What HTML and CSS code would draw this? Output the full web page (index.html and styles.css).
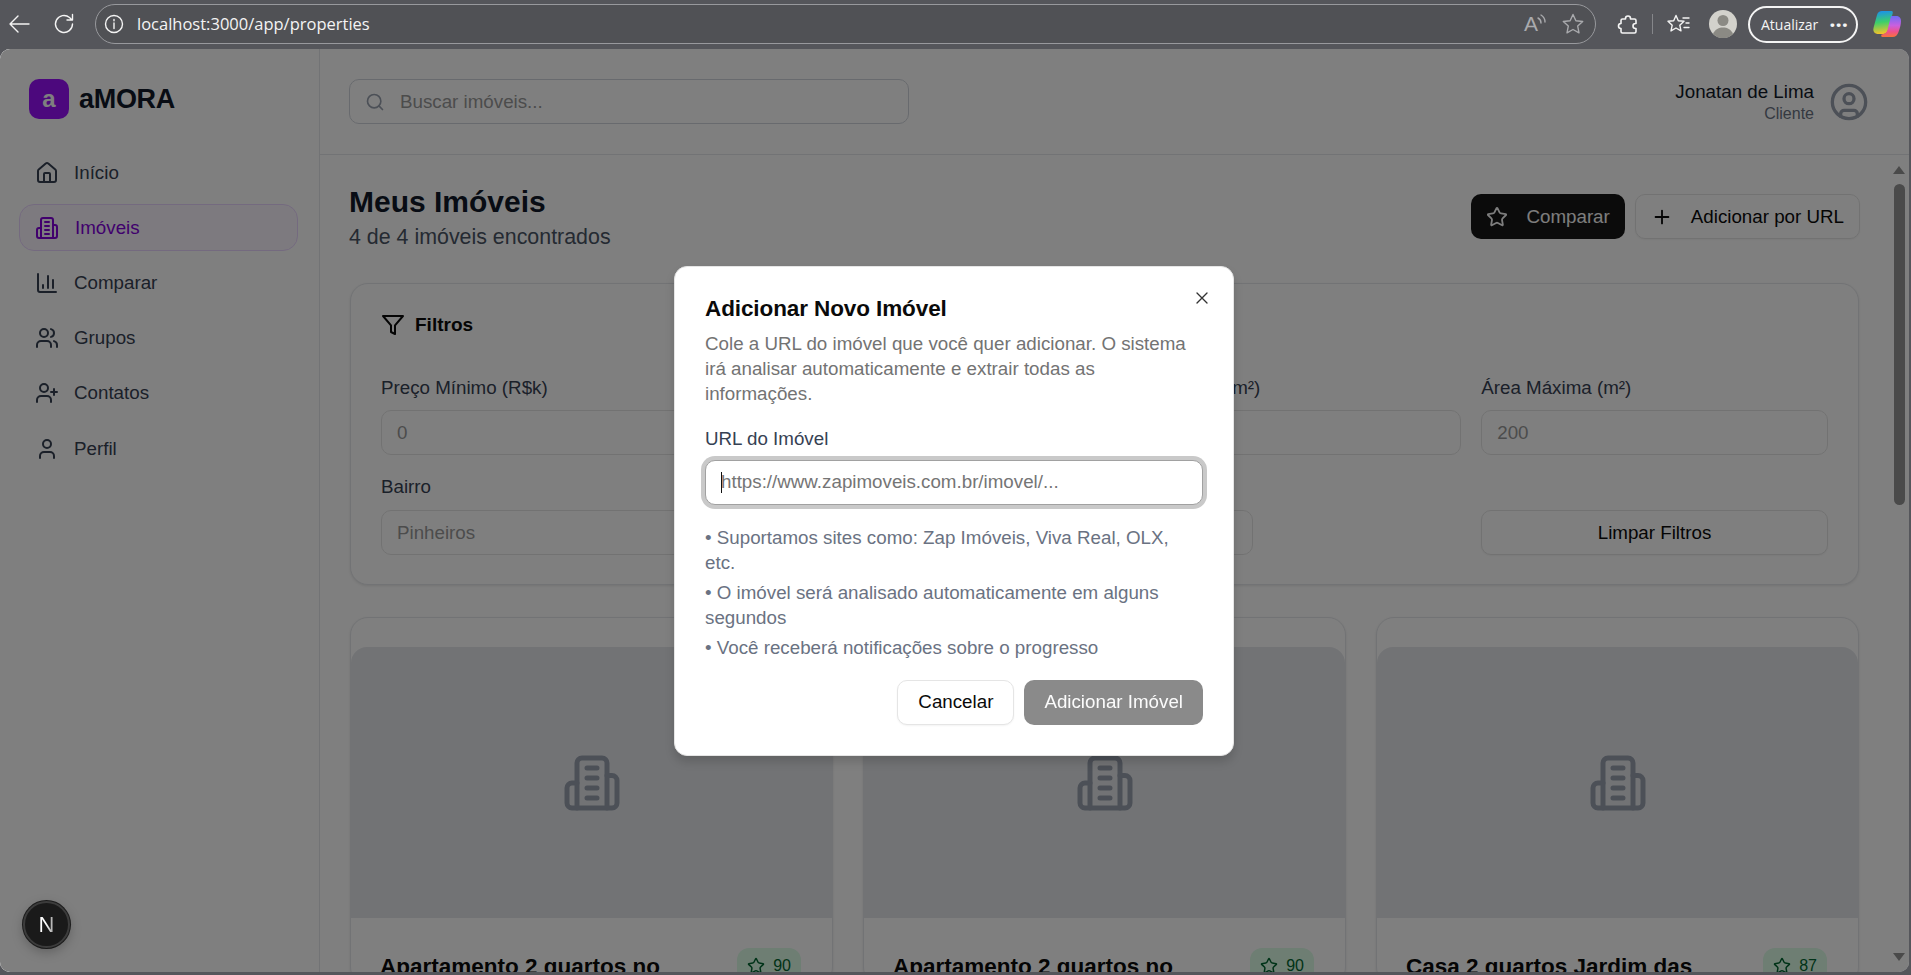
FILE: index.html
```html
<!DOCTYPE html>
<html lang="pt-BR">

<head>
    <meta charset="UTF-8">
    <meta name="viewport" content="width=device-width, initial-scale=1.0">
    <title>aMORA - Meus Imóveis</title>
    <link rel="stylesheet" href="styles.css">
</head>

<body>
    <!-- browser toolbar -->
    <div class="toolbar">
        <svg class="tb-icon" viewBox="0 0 24 24"><path d="M22 12H3M11 4l-8 8 8 8" /></svg>
        <svg class="tb-icon tb-reload" viewBox="0 0 24 24"><path d="M20.5 12a8.5 8.5 0 1 1-3-6.5L20 8M20.5 2.5V8H15" /></svg>
        <div class="addressbar">
            <svg class="tb-icon" viewBox="0 0 24 24"><circle cx="12" cy="12" r="8.5" /><path d="M12 11v5.5M12 7.5v1.2" /></svg>
            <span class="url">localhost:3000/app/properties</span>
            <span class="read-a">A</span>
            <svg class="tb-icon tb-dim tb-waves" viewBox="0 0 24 24"><path d="M4 6c2 1 3 2.500 3 5M7 3c2.500 1.500 4 4 4 7" /></svg>
            <svg class="tb-icon tb-dim tb-star" viewBox="0 0 24 24"><path d="M12 2.500l2.900 6.200 6.800.8-5 4.600 1.300 6.700-6-3.300-6 3.300 1.300-6.700-5-4.600 6.800-.8z" /></svg>
        </div>
        <svg class="tb-icon tb-puzzle" viewBox="0 0 24 24"><path d="M9.500 6.500a2.500 2.500 0 1 1 5 0V7h4a1.500 1.500 0 0 1 1.500 1.500v3h-.5a2.500 2.500 0 1 0 0 5h.5v3a1.500 1.500 0 0 1-1.500 1.500h-12A1.500 1.500 0 0 1 5 19.500v-3a2.500 2.500 0 1 1 0-5v-3A1.500 1.500 0 0 1 6.500 7h3z" /></svg>
        <span class="tb-sep"></span>
        <svg class="tb-icon tb-favs" viewBox="0 0 24 24"><path d="M10 3.500l2.300 5.200 5.700.6-4.200 3.900 1.200 5.700-5-2.900-5 2.900 1.200-5.700L2 9.300l5.700-.6zM17 6h6M20 11h3M18 15.500h5" /></svg>
        <svg class="tb-avatar" viewBox="0 0 28 28"><circle cx="14" cy="14" r="14" fill="#d3d2cc" /><circle cx="14" cy="10.500" r="5.500" fill="#8b8a84" /><path d="M4 24c2-5 6-6.500 10-6.500s8 1.500 10 6.500a14 14 0 0 1-20 0z" fill="#8b8a84" /></svg>
        <div class="update-pill"><span>Atualizar</span><span class="dots">···</span></div>
        <svg class="tb-copilot" viewBox="0 0 28 28">
            <defs>
                <linearGradient id="copA" x1="0.2" y1="0" x2="0.3" y2="1"><stop offset="0" stop-color="#1a8ef0" /><stop offset="0.5" stop-color="#3ccf6a" /><stop offset="1" stop-color="#f5c22a" /></linearGradient>
                <linearGradient id="copB" x1="0.5" y1="0" x2="0.5" y2="1"><stop offset="0" stop-color="#6e6cf5" /><stop offset="0.45" stop-color="#c860e0" /><stop offset="0.75" stop-color="#f0508a" /><stop offset="1" stop-color="#f8733a" /></linearGradient>
            </defs>
            <path d="M9 1h9.500c1.500 0 1.500 1.500 1 3L15 20c-.8 2.500-2.500 4-5 4H6c-2.500 0-4-.5-5-2-1-1.500-.8-3 0-6l3-11C5 2 6.500 1 9 1z" fill="url(#copA)" />
            <path d="M18 6h5c3 0 5 1.500 5 5 0 3-1 7-2.500 11-1 3-3 5-6 5H9.500c-1.500 0-1.500-1-1-2.500 3-.5 5-1.500 6-4.500z" fill="url(#copB)" />
        </svg>
    </div>

    <div class="viewport">
        <aside class="sidebar">
            <div class="brand">
                <span class="brand-mark">a</span>
                <span class="brand-name">aMORA</span>
            </div>
            <nav class="nav">
                <a class="nav-item"><svg class="icon" viewBox="0 0 24 24"><path d="M15 21v-8a1 1 0 0 0-1-1h-4a1 1 0 0 0-1 1v8" /><path d="M3 10a2 2 0 0 1 .709-1.528l7-5.999a2 2 0 0 1 2.582 0l7 5.999A2 2 0 0 1 21 10v9a2 2 0 0 1-2 2H5a2 2 0 0 1-2-2z" /></svg>Início</a>
                <a class="nav-item active"><svg class="icon" viewBox="0 0 24 24"><path d="M6 22V4a2 2 0 0 1 2-2h8a2 2 0 0 1 2 2v18Z" /><path d="M6 12H4a2 2 0 0 0-2 2v6a2 2 0 0 0 2 2h2" /><path d="M18 9h2a2 2 0 0 1 2 2v9a2 2 0 0 1-2 2h-2" /><path d="M10 6h4M10 10h4M10 14h4M10 18h4" /></svg>Imóveis</a>
                <a class="nav-item"><svg class="icon" viewBox="0 0 24 24"><path d="M3 3v16a2 2 0 0 0 2 2h16" /><path d="M18 17V9M13 17V5M8 17v-3" /></svg>Comparar</a>
                <a class="nav-item"><svg class="icon" viewBox="0 0 24 24"><path d="M16 21v-2a4 4 0 0 0-4-4H6a4 4 0 0 0-4 4v2" /><circle cx="9" cy="7" r="4" /><path d="M22 21v-2a4 4 0 0 0-3-3.870" /><path d="M16 3.130a4 4 0 0 1 0 7.750" /></svg>Grupos</a>
                <a class="nav-item"><svg class="icon" viewBox="0 0 24 24"><path d="M16 21v-2a4 4 0 0 0-4-4H6a4 4 0 0 0-4 4v2" /><circle cx="9" cy="7" r="4" /><path d="M19 8v6M22 11h-6" /></svg>Contatos</a>
                <a class="nav-item"><svg class="icon" viewBox="0 0 24 24"><path d="M19 21v-2a4 4 0 0 0-4-4H9a4 4 0 0 0-4 4v2" /><circle cx="12" cy="7" r="4" /></svg>Perfil</a>
            </nav>
        </aside>

        <div class="main">
            <header class="topbar">
                <div class="search">
                    <svg class="icon search-icon" viewBox="0 0 24 24"><circle cx="11" cy="11" r="8" /><path d="m21 21-4.300-4.300" /></svg>
                    <input type="text" placeholder="Buscar imóveis...">
                </div>
                <div class="user">
                    <div class="user-info">
                        <div class="user-name">Jonatan de Lima</div>
                        <div class="user-role">Cliente</div>
                    </div>
                    <svg class="icon user-icon" viewBox="0 0 24 24"><circle cx="12" cy="12" r="10" /><circle cx="12" cy="10" r="3" /><path d="M7 20.662V19a2 2 0 0 1 2-2h6a2 2 0 0 1 2 2v1.662" /></svg>
                </div>
            </header>

            <div class="scroll-area">
                <div class="content">
                    <div class="page-head">
                        <div>
                            <h1>Meus Imóveis</h1>
                            <p class="subtitle">4 de 4 imóveis encontrados</p>
                        </div>
                        <div class="page-actions">
                            <button class="btn btn-dark"><svg class="icon" viewBox="0 0 24 24"><path d="M11.525 2.295a.530.530 0 0 1 .950 0l2.310 4.679a2.123 2.123 0 0 0 1.595 1.160l5.166.756a.530.530 0 0 1 .294.904l-3.736 3.638a2.123 2.123 0 0 0-.611 1.878l.882 5.140a.530.530 0 0 1-.771.560l-4.618-2.428a2.122 2.122 0 0 0-1.973 0L6.396 21.010a.530.530 0 0 1-.770-.560l.881-5.139a2.122 2.122 0 0 0-.611-1.879L2.160 9.795a.530.530 0 0 1 .294-.906l5.165-.755a2.122 2.122 0 0 0 1.597-1.160z" /></svg>Comparar</button>
                            <button class="btn btn-outline"><svg class="icon" viewBox="0 0 24 24"><path d="M5 12h14M12 5v14" /></svg>Adicionar por URL</button>
                        </div>
                    </div>

                    <section class="filters">
                        <h2><svg class="icon" viewBox="0 0 24 24"><polygon points="22 3 2 3 10 12.460 10 19 14 21 14 12.460 22 3" /></svg>Filtros</h2>
                        <div class="filter-row">
                            <div class="field"><label>Preço Mínimo (R$k)</label><input type="text" placeholder="0"></div>
                            <div class="field"><label></label><input type="text"></div>
                            <div class="field"><label>Área Mínima (m²)</label><input type="text"></div>
                            <div class="field"><label>Área Máxima (m²)</label><input type="text" placeholder="200"></div>
                        </div>
                        <div class="filter-row filter-row-2">
                            <div class="field"><label>Bairro</label><input type="text" placeholder="Pinheiros"></div>
                            <div class="field"><label></label><input type="text"></div>
                            <div class="field field-end"><button class="btn btn-outline btn-wide">Limpar Filtros</button></div>
                        </div>
                    </section>

                    <div class="property-grid">
                        <article class="property">
                            <div class="property-img"><svg class="icon" viewBox="0 0 24 24"><path d="M6 22V4a2 2 0 0 1 2-2h8a2 2 0 0 1 2 2v18Z" /><path d="M6 12H4a2 2 0 0 0-2 2v6a2 2 0 0 0 2 2h2" /><path d="M18 9h2a2 2 0 0 1 2 2v9a2 2 0 0 1-2 2h-2" /><path d="M10 6h4M10 10h4M10 14h4M10 18h4" /></svg></div>
                            <div class="property-body">
                                <h3>Apartamento 2 quartos no</h3>
                                <span class="score"><svg class="icon" viewBox="0 0 24 24"><path d="M11.525 2.295a.530.530 0 0 1 .950 0l2.310 4.679a2.123 2.123 0 0 0 1.595 1.160l5.166.756a.530.530 0 0 1 .294.904l-3.736 3.638a2.123 2.123 0 0 0-.611 1.878l.882 5.140a.530.530 0 0 1-.771.560l-4.618-2.428a2.122 2.122 0 0 0-1.973 0L6.396 21.010a.530.530 0 0 1-.770-.560l.881-5.139a2.122 2.122 0 0 0-.611-1.879L2.160 9.795a.530.530 0 0 1 .294-.906l5.165-.755a2.122 2.122 0 0 0 1.597-1.160z" /></svg>90</span>
                            </div>
                        </article>
                        <article class="property">
                            <div class="property-img"><svg class="icon" viewBox="0 0 24 24"><path d="M6 22V4a2 2 0 0 1 2-2h8a2 2 0 0 1 2 2v18Z" /><path d="M6 12H4a2 2 0 0 0-2 2v6a2 2 0 0 0 2 2h2" /><path d="M18 9h2a2 2 0 0 1 2 2v9a2 2 0 0 1-2 2h-2" /><path d="M10 6h4M10 10h4M10 14h4M10 18h4" /></svg></div>
                            <div class="property-body">
                                <h3>Apartamento 2 quartos no</h3>
                                <span class="score"><svg class="icon" viewBox="0 0 24 24"><path d="M11.525 2.295a.530.530 0 0 1 .950 0l2.310 4.679a2.123 2.123 0 0 0 1.595 1.160l5.166.756a.530.530 0 0 1 .294.904l-3.736 3.638a2.123 2.123 0 0 0-.611 1.878l.882 5.140a.530.530 0 0 1-.771.560l-4.618-2.428a2.122 2.122 0 0 0-1.973 0L6.396 21.010a.530.530 0 0 1-.770-.560l.881-5.139a2.122 2.122 0 0 0-.611-1.879L2.160 9.795a.530.530 0 0 1 .294-.906l5.165-.755a2.122 2.122 0 0 0 1.597-1.160z" /></svg>90</span>
                            </div>
                        </article>
                        <article class="property">
                            <div class="property-img"><svg class="icon" viewBox="0 0 24 24"><path d="M6 22V4a2 2 0 0 1 2-2h8a2 2 0 0 1 2 2v18Z" /><path d="M6 12H4a2 2 0 0 0-2 2v6a2 2 0 0 0 2 2h2" /><path d="M18 9h2a2 2 0 0 1 2 2v9a2 2 0 0 1-2 2h-2" /><path d="M10 6h4M10 10h4M10 14h4M10 18h4" /></svg></div>
                            <div class="property-body">
                                <h3>Casa 2 quartos Jardim das</h3>
                                <span class="score"><svg class="icon" viewBox="0 0 24 24"><path d="M11.525 2.295a.530.530 0 0 1 .950 0l2.310 4.679a2.123 2.123 0 0 0 1.595 1.160l5.166.756a.530.530 0 0 1 .294.904l-3.736 3.638a2.123 2.123 0 0 0-.611 1.878l.882 5.140a.530.530 0 0 1-.771.560l-4.618-2.428a2.122 2.122 0 0 0-1.973 0L6.396 21.010a.530.530 0 0 1-.770-.560l.881-5.139a2.122 2.122 0 0 0-.611-1.879L2.160 9.795a.530.530 0 0 1 .294-.906l5.165-.755a2.122 2.122 0 0 0 1.597-1.160z" /></svg>87</span>
                            </div>
                        </article>
                    </div>
                </div>

                <div class="scrollbar">
                    <span class="arrow-up"></span>
                    <span class="thumb"></span>
                    <span class="arrow-down"></span>
                </div>
            </div>
        </div>

        <div class="overlay">
            <div class="modal">
                <svg class="icon modal-close" viewBox="0 0 24 24"><path d="M18 6 6 18M6 6l12 12" /></svg>
                <h2 class="modal-title">Adicionar Novo Imóvel</h2>
                <p class="modal-desc">Cole a URL do imóvel que você quer adicionar. O sistema irá analisar automaticamente e extrair todas as informações.</p>
                <label class="modal-label">URL do Imóvel</label>
                <div class="modal-input">
                    <input type="text" placeholder="https://www.zapimoveis.com.br/imovel/...">
                    <span class="caret"></span>
                </div>
                <ul class="modal-notes">
                    <li>• Suportamos sites como: Zap Imóveis, Viva Real, OLX, etc.</li>
                    <li>• O imóvel será analisado automaticamente em alguns segundos</li>
                    <li>• Você receberá notificações sobre o progresso</li>
                </ul>
                <div class="modal-actions">
                    <button class="btn btn-outline">Cancelar</button>
                    <button class="btn btn-disabled">Adicionar Imóvel</button>
                </div>
            </div>
        </div>

        <!-- dev tools badge sits above the dialog backdrop -->
        <div class="next-badge"><span class="next-n">N</span></div>
    </div>
</body>

</html>
```

FILE: styles.css
```css
* {
    box-sizing: border-box;
}

html,
body {
    height: 100%;
    margin: 0;
}

body {
    display: flex;
    flex-direction: column;
    overflow: hidden;
    background-color: #55565b;
    font-family: "Liberation Sans", Arial, Helvetica, sans-serif;
    font-size: 18.75px;
    color: #0a0a0a;
}

h1,
h2,
h3,
p,
ul {
    margin: 0;
    padding: 0;
}

button,
input {
    font: inherit;
}

.icon {
    display: block;
    flex: none;
    width: 24px;
    height: 24px;
    fill: none;
    stroke: currentColor;
    stroke-width: 2;
    stroke-linecap: round;
    stroke-linejoin: round;
}

/* browser toolbar */
.toolbar {
    display: flex;
    align-items: center;
    flex: none;
    height: 49px;
    padding: 0 10px 1px 7px;
    color: #f4f4f4;
}

.tb-icon {
    flex: none;
    width: 24px;
    height: 24px;
    fill: none;
    stroke: currentColor;
    stroke-width: 1.4;
    stroke-linecap: round;
    stroke-linejoin: round;
}

.tb-reload {
    margin-left: 21px;
}

.addressbar {
    display: flex;
    align-items: center;
    flex: 1;
    height: 40px;
    margin-left: 19px;
    padding: 0 10px 0 6px;
    background-color: #505155;
    border: 1px solid #98999d;
    border-radius: 20px;
}

.url {
    flex: 1;
    margin: -2px 0 0 11px;
    font-family: "Open Sans", sans-serif;
    font-size: 16.5px;
}

.tb-dim {
    color: #a9aaad;
}

.read-a {
    font-size: 21px;
    color: #a9aaad;
}

.tb-waves {
    margin-left: -4px;
}

.tb-star {
    margin-left: 3px;
}

.tb-puzzle {
    margin-left: 20px;
    stroke-width: 1.6;
}

.tb-sep {
    width: 1px;
    height: 20px;
    margin: 0 13px 0 12px;
    background-color: #85868a;
}

.tb-avatar {
    flex: none;
    width: 28px;
    height: 28px;
    margin-left: 19px;
}

.update-pill {
    display: flex;
    align-items: center;
    justify-content: space-between;
    width: 110px;
    height: 37px;
    margin-left: 11px;
    padding: 0 8px 0 11px;
    border: 2px solid #f4f4f4;
    border-radius: 19px;
    font-family: "Open Sans", sans-serif;
    font-size: 14px;
}

.dots {
    font-size: 22px;
    font-weight: 700;
    line-height: 20px;
}

.tb-copilot {
    flex: none;
    width: 28px;
    height: 28px;
    margin-left: 15px;
}

/* app window */
.viewport {
    position: relative;
    display: flex;
    flex: 1;
    min-height: 0;
    margin: 0 2px 3px 0;
    background-color: #fff;
    border-radius: 10px;
    overflow: hidden;
}

.sidebar {
    flex: none;
    width: 320px;
    padding: 30px 21px 0 19px;
    background-color: #fff;
    border-right: 1px solid #e5e7eb;
}

.brand {
    display: flex;
    align-items: center;
    gap: 10px;
    padding-left: 10px;
}

.brand-mark {
    display: flex;
    align-items: center;
    justify-content: center;
    width: 40px;
    height: 40px;
    background-color: #9810fa;
    border-radius: 10px;
    color: #fff;
    font-size: 24px;
    font-weight: 700;
}

.brand-name {
    font-size: 27px;
    font-weight: 700;
    color: #101828;
    letter-spacing: -0.3px;
}

.nav {
    display: flex;
    flex-direction: column;
    gap: 8px;
    margin-top: 30px;
}

.nav-item {
    display: flex;
    align-items: center;
    gap: 15px;
    height: 47.2px;
    padding: 0 15px;
    border: 1px solid transparent;
    border-radius: 15px;
    color: #364153;
}

.nav-item.active {
    gap: 16px;
    background-color: #faf5ff;
    border-color: #e9d4ff;
    color: #8200db;
}

.main {
    display: flex;
    flex-direction: column;
    flex: 1;
    min-width: 0;
}

.topbar {
    display: flex;
    align-items: center;
    justify-content: space-between;
    flex: none;
    height: 106px;
    padding: 0 40px 0 29px;
    border-bottom: 1px solid #e5e7eb;
}

.search {
    display: flex;
    align-items: center;
    gap: 15px;
    width: 560px;
    height: 45px;
    padding: 0 15px;
    border: 1px solid #d1d5dc;
    border-radius: 10px;
}

.search-icon {
    width: 20px;
    height: 20px;
    color: #99a1af;
}

.search input {
    flex: 1;
    border: none;
    outline: none;
    background: none;
    padding: 0;
}

input::placeholder {
    color: #999;
}

.user {
    display: flex;
    align-items: center;
    gap: 15px;
}

.user-info {
    text-align: right;
}

.user-name {
    line-height: 25px;
    color: #101828;
}

.user-role {
    font-size: 16px;
    line-height: 20px;
    color: #6a7282;
}

.user-icon {
    width: 40px;
    height: 40px;
    color: #99a1af;
}

.scroll-area {
    display: flex;
    flex: 1;
    min-height: 0;
}

.content {
    flex: 1;
    min-width: 0;
    padding: 29px 30px 0 30px;
}

.page-head {
    display: flex;
    align-items: center;
    justify-content: space-between;
    margin: 0 -1px;
}

h1 {
    font-size: 30px;
    line-height: 36px;
    font-weight: 700;
    color: #101828;
}

.subtitle {
    margin-top: 3px;
    font-size: 21.4px;
    line-height: 28px;
    color: #4a5565;
}

.page-actions {
    display: flex;
    gap: 10px;
    margin-top: -2px;
}

.btn {
    display: inline-flex;
    align-items: center;
    justify-content: center;
    height: 45px;
    padding: 0 15px;
    border: 1px solid transparent;
    border-radius: 10px;
    white-space: nowrap;
}

.btn .icon {
    width: 22px;
    height: 22px;
    margin-right: 18px;
}

.btn-dark {
    padding: 0 14px;
    background-color: #171717;
    color: #fafafa;
}

.btn-outline {
    background-color: #fff;
    border-color: #e5e5e5;
    color: #0a0a0a;
    box-shadow: 0 1px 2px rgba(0, 0, 0, 0.05);
}

.btn-disabled {
    background-color: #171717;
    color: #fafafa;
    opacity: 0.5;
    padding: 0 19px;
}

.filters {
    margin-top: 32px;
    padding: 30px 30px 29px;
    background-color: #fff;
    border: 1px solid #e5e7eb;
    border-radius: 18px;
    box-shadow: 0 1px 3px rgba(0, 0, 0, 0.1);
}

.filters h2 {
    display: flex;
    align-items: center;
    gap: 10px;
    height: 22px;
    font-size: 19px;
    font-weight: 700;
}

.filter-row {
    display: grid;
    grid-template-columns: repeat(4, 1fr);
    gap: 20px;
    margin-top: 39px;
}

.filter-row-2 {
    grid-template-columns: 347px 505px 1fr 347px;
    margin-top: 19px;
}

.field {
    display: flex;
    flex-direction: column;
    gap: 10px;
}

.filter-row-2 .field {
    gap: 11px;
}

.field-end {
    grid-column: 4;
    justify-content: flex-end;
}

.field label {
    min-height: 25px;
    line-height: 25px;
    color: #364153;
}

.field input {
    height: 45px;
    padding: 0 15px;
    background: #fff;
    border: 1px solid #e5e5e5;
    border-radius: 10px;
    outline: none;
}

.btn-wide {
    width: 100%;
}

.property-grid {
    display: grid;
    grid-template-columns: repeat(3, 1fr);
    gap: 30px;
    margin-top: 32px;
}

.property {
    padding-top: 29px;
    background-color: #fff;
    border: 1px solid #e5e7eb;
    border-radius: 18px;
    box-shadow: 0 1px 3px rgba(0, 0, 0, 0.1);
}

.property-img {
    display: flex;
    align-items: center;
    justify-content: center;
    height: 271px;
    background-color: #e5e7eb;
    border-radius: 16px 16px 0 0;
    color: #99a1af;
}

.property-img .icon {
    width: 60px;
    height: 60px;
}

.property-body {
    display: flex;
    align-items: flex-start;
    justify-content: space-between;
    padding: 30px 31px 0 29px;
}

.property-body h3 {
    font-size: 22.5px;
    line-height: 30px;
    font-weight: 700;
    margin-top: 4px;
}

.score {
    display: flex;
    align-items: center;
    gap: 8px;
    height: 36px;
    padding: 0 10px;
    background-color: #dcfce7;
    border-radius: 12px;
    font-size: 16px;
    color: #016630;
}

.score .icon {
    width: 18px;
    height: 18px;
}

/* fake scrollbar, the page behind the dialog does not scroll */
.scrollbar {
    display: flex;
    flex-direction: column;
    align-items: center;
    flex: none;
    width: 20px;
    padding-top: 11px;
}

.arrow-up,
.arrow-down {
    width: 0;
    height: 0;
    border-left: 6px solid transparent;
    border-right: 6px solid transparent;
}

.arrow-up {
    border-bottom: 8px solid #959595;
}

.arrow-down {
    margin-top: 448px;
    border-top: 8px solid #959595;
}

.thumb {
    width: 11px;
    height: 321px;
    margin-top: 10px;
    background-color: #959595;
    border-radius: 6px;
}

.next-badge {
    position: absolute;
    left: 23px;
    bottom: 24px;
    display: flex;
    align-items: center;
    justify-content: center;
    width: 47px;
    height: 47px;
    background-color: #1a1a1a;
    border: 2px solid #3c3c3c;
    border-radius: 50%;
    box-shadow: 0 0 0 1px #1a1a1a, 0 4px 12px rgba(0, 0, 0, 0.25);
}

.next-n {
    font-size: 22px;
    line-height: 22px;
    background: linear-gradient(90deg, #fff 45%, #999 100%);
    -webkit-background-clip: text;
    background-clip: text;
    color: transparent;
}

/* dialog */
.overlay {
    position: absolute;
    inset: 0;
    display: flex;
    align-items: center;
    justify-content: center;
    padding-right: 1px;
    background-color: rgba(0, 0, 0, 0.5);
}

.modal {
    position: relative;
    width: 560px;
    padding: 30px;
    background-color: #fff;
    border: 1px solid #e5e5e5;
    border-radius: 13px;
    box-shadow: 0 6px 10px rgba(0, 0, 0, 0.15);
}

.modal-close {
    position: absolute;
    top: 21px;
    right: 21px;
    width: 20px;
    height: 20px;
    stroke-width: 1.6;
    color: #333;
}

.modal-title {
    font-size: 22.5px;
    line-height: 23px;
    font-weight: 700;
    letter-spacing: -0.1px;
    color: #0a0a0a;
}

.modal-desc {
    margin-top: 11px;
    line-height: 25px;
    color: #737373;
}

.modal-label {
    display: block;
    margin-top: 20px;
    line-height: 25px;
    color: #364153;
}

.modal-input {
    position: relative;
    margin-top: 9px;
}

.modal-input input {
    display: block;
    width: 100%;
    height: 45px;
    padding: 0 15px;
    border: 1px solid #a1a1a1;
    border-radius: 10px;
    outline: none;
    box-shadow: 0 0 0 4px #c9c9c9;
}

.modal-input input::placeholder {
    color: #757575;
}

.caret {
    position: absolute;
    top: 12px;
    left: 16px;
    width: 1px;
    height: 21px;
    background-color: #111;
}

.modal-notes {
    display: flex;
    flex-direction: column;
    gap: 5px;
    margin-top: 20px;
    padding-right: 12px;
    list-style: none;
    line-height: 25px;
    color: #6a7282;
}

.modal-actions {
    display: flex;
    justify-content: flex-end;
    gap: 10px;
    margin-top: 20px;
}

.modal-actions .btn-outline {
    padding: 0 20px;
}
```
